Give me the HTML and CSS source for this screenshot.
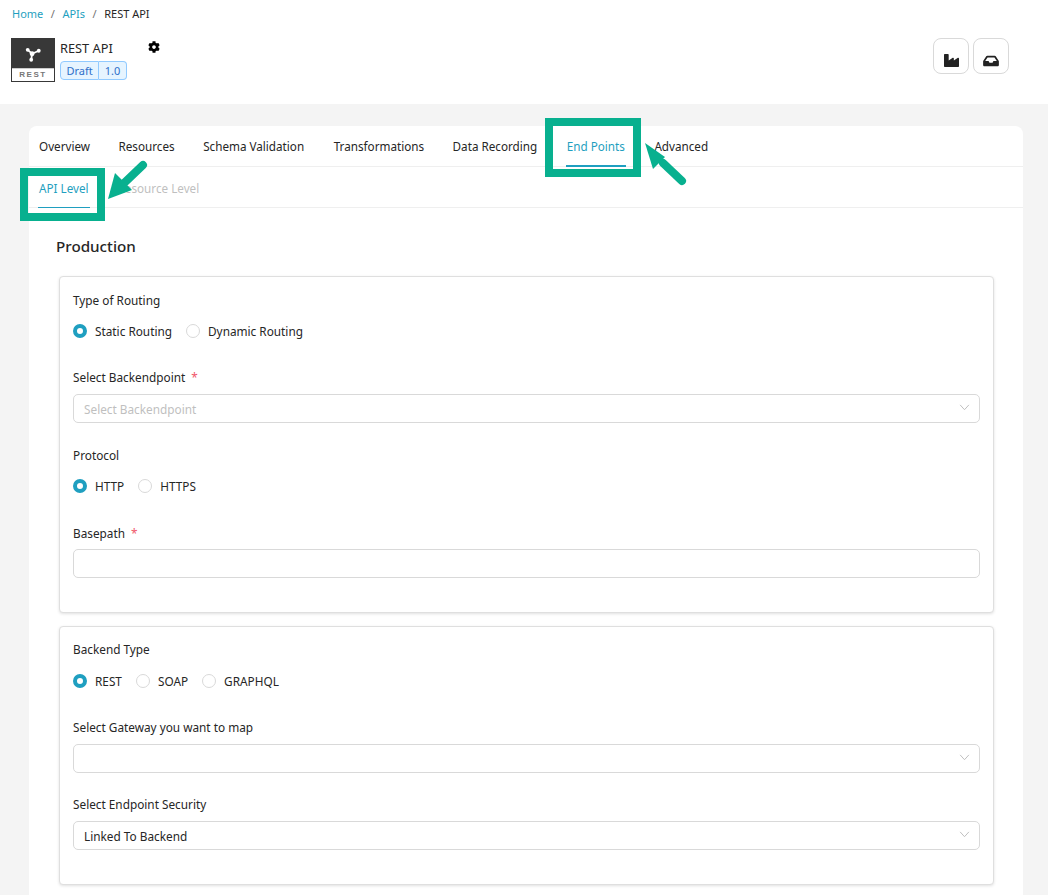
FILE: index.html
```html
<!DOCTYPE html>
<html lang="en">
<head>
<meta charset="utf-8">
<title>REST API</title>
<link rel="stylesheet" href="styles.css">
</head>
<body>
<div class="page">
  <header class="header">
    <nav class="crumbs"><a>Home</a><i>/</i><a>APIs</a><i>/</i><span>REST API</span></nav>
    <div class="title-row">
      <div class="logo">
        <div class="logo-top">
          <svg viewBox="0 0 20 20" width="18" height="18"><path d="M4.100 5.400L9 9.700L16.400 6.400M9 9.700L8 16.400" fill="none" stroke="#fff" stroke-width="2"/><circle cx="4.100" cy="5.400" r="2.100" fill="#fff"/><circle cx="16.400" cy="6.400" r="2.100" fill="#fff"/><circle cx="8" cy="16.400" r="2.100" fill="#fff"/><circle cx="9" cy="9.700" r="2.700" fill="#fff"/></svg>
        </div>
        <div class="logo-label">REST</div>
      </div>
      <div class="api-info">
        <div class="api-name-row">
          <span class="api-name">REST API</span>
          <svg class="gear" viewBox="0 0 512 512" width="12" height="12"><path d="M487.4 315.700l-42.600-24.600c4.300-23.200 4.300-47 0-70.200l42.600-24.600c4.900-2.800 7.100-8.600 5.500-14-11.100-35.600-30-67.800-54.700-94.600-3.800-4.100-10-5.100-14.800-2.300L380.800 110c-17.900-15.400-38.500-27.300-60.800-35.100V25.800c0-5.600-3.900-10.500-9.400-11.700-36.700-8.200-74.300-7.800-109.200 0-5.500 1.200-9.400 6.100-9.400 11.700V75c-22.200 7.900-42.800 19.800-60.800 35.100L88.700 85.500c-4.900-2.800-11-1.900-14.800 2.300-24.700 26.700-43.600 58.900-54.700 94.600-1.700 5.400.6 11.200 5.500 14L67.300 221c-4.300 23.200-4.300 47 0 70.200l-42.600 24.600c-4.900 2.800-7.100 8.600-5.500 14 11.100 35.600 30 67.800 54.700 94.600 3.800 4.100 10 5.100 14.800 2.300l42.600-24.600c17.900 15.400 38.500 27.300 60.800 35.100v49.200c0 5.600 3.900 10.500 9.400 11.700 36.700 8.200 74.300 7.800 109.200 0 5.500-1.200 9.400-6.100 9.400-11.700v-49.200c22.200-7.900 42.800-19.800 60.800-35.100l42.600 24.600c4.900 2.800 11 1.900 14.800-2.300 24.700-26.700 43.600-58.900 54.700-94.600 1.500-5.500-.7-11.300-5.600-14.100zM256 336c-44.100 0-80-35.900-80-80s35.900-80 80-80 80 35.900 80 80-35.900 80-80 80z"/></svg>
        </div>
        <div class="tags"><span class="tag">Draft</span><span class="tag">1.0</span></div>
      </div>
      <div class="actions">
        <button class="icon-btn"><svg viewBox="0 0 512 512" width="15" height="15"><path d="M475.115 163.781L336 252.309v-68.280c0-18.916-20.931-30.399-36.885-20.248L160 252.309V56c0-13.255-10.745-24-24-24H24C10.745 32 0 42.745 0 56v400c0 13.255 10.745 24 24 24h464c13.255 0 24-10.745 24-24V184.029c0-18.917-20.931-30.399-36.885-20.248z" fill="#222"/></svg></button>
        <button class="icon-btn"><svg viewBox="0 0 576 512" width="16" height="14"><path d="M567.938 243.908L462.250 85.374A48.003 48.003 0 0 0 422.311 64H153.689a48 48 0 0 0-39.938 21.374L8.062 243.908A47.994 47.994 0 0 0 0 270.533V400c0 26.510 21.490 48 48 48h480c26.510 0 48-21.490 48-48V270.533a47.994 47.994 0 0 0-8.062-26.625zM162.252 128h251.497l85.333 128H376l-32 64H232l-32-64H76.918l85.334-128z" fill="#222"/></svg></button>
      </div>
    </div>
  </header>

  <main class="content">
    <section class="card">
      <div class="tabs">
        <span class="tab">Overview</span>
        <span class="tab">Resources</span>
        <span class="tab">Schema Validation</span>
        <span class="tab tab-wide">Transformations</span>
        <span class="tab">Data Recording</span>
        <span class="tab active">End Points</span>
        <span class="tab">Advanced</span>
      </div>
      <div class="subtabs">
        <span class="subtab active">API Level</span>
        <span class="subtab muted">Resource Level</span>
      </div>
      <div class="body">
        <h2 class="heading">Production</h2>

        <div class="panel panel-first">
          <div class="label">Type of Routing</div>
          <div class="radios">
            <span class="radio on">Static Routing</span>
            <span class="radio">Dynamic Routing</span>
          </div>
          <div class="label label-top">Select Backendpoint <b class="req">*</b></div>
          <div class="control select placeholder">Select Backendpoint<svg class="chev" viewBox="0 0 12 8" width="11" height="7"><path d="M1 1l5 5.500L11 1" fill="none" stroke="#bdbdbd" stroke-width="1.100"/></svg></div>
          <div class="label label-next">Protocol</div>
          <div class="radios">
            <span class="radio on">HTTP</span>
            <span class="radio">HTTPS</span>
          </div>
          <div class="label label-base">Basepath <b class="req">*</b></div>
          <div class="control"></div>
        </div>

        <div class="panel panel-second">
          <div class="label">Backend Type</div>
          <div class="radios radios-loose">
            <span class="radio on">REST</span>
            <span class="radio">SOAP</span>
            <span class="radio">GRAPHQL</span>
          </div>
          <div class="label label-top">Select Gateway you want to map</div>
          <div class="control select"><svg class="chev" viewBox="0 0 12 8" width="11" height="7"><path d="M1 1l5 5.500L11 1" fill="none" stroke="#bdbdbd" stroke-width="1.100"/></svg></div>
          <div class="label label-next">Select Endpoint Security</div>
          <div class="control select">Linked To Backend<svg class="chev" viewBox="0 0 12 8" width="11" height="7"><path d="M1 1l5 5.500L11 1" fill="none" stroke="#bdbdbd" stroke-width="1.100"/></svg></div>
        </div>
      </div>
    </section>
  </main>

  <div class="callout callout-api"></div>
  <div class="callout callout-end"></div>
  <svg class="arrows" viewBox="0 0 1048 895" width="1048" height="895">
    <path class="arrow-line" d="M143 165L121 186"/>
    <path class="arrow-head" d="M108 199L115 173L132 190Z"/>
    <path class="arrow-line" d="M663 163L682 181"/>
    <path class="arrow-head" d="M645 143L665 157L653 169Z"/>
  </svg>
</div>
</body>
</html>
```
FILE: styles.css
```css
*, *::before, *::after { box-sizing: border-box; }
html, body { margin: 0; padding: 0; }
body {
  font-family: "Noto Sans", "Open Sans", sans-serif;
  font-size: 11.800px;
  color: #262626;
  background: #f4f4f4;
}
.page { position: relative; width: 1048px; height: 895px; overflow: hidden; }

.header { height: 104px; background: #fff; padding: 6px 39px 0 11px; }
.crumbs { display: flex; align-items: center; height: 16px; padding-left: 1px; font-size: 11px; line-height: 16px; }
.crumbs a { color: #1f9fc0; }
.crumbs i { font-style: normal; color: #737373; margin: 0 7.500px; }
.title-row { display: flex; margin-top: 16px; }
.logo { width: 44px; height: 44px; border: 1px solid #383838; display: flex; flex-direction: column; }
.logo-top { height: 29px; background: #383838; display: flex; align-items: center; justify-content: center; }
.logo-label { flex: 1; background: #fff; border-top: 1px solid #ccc; font-family: "Liberation Sans", sans-serif; font-size: 8px; font-weight: 700; letter-spacing: 1.500px; color: #777; text-align: center; line-height: 12px; }
.api-info { margin-left: 5px; }
.api-name-row { display: flex; align-items: flex-start; height: 23px; }
.api-name { font-size: 12.800px; line-height: 20px; }
.gear { margin-left: 35px; margin-top: 3px; }
.tags { display: flex; }
.tag { height: 19px; padding: 0 5.500px; line-height: 17px; font-size: 11px; color: #2f6fc9; background: #e6f4ff; border: 1px solid #91caff; }
.tag:first-child { border-radius: 4px 0 0 4px; }
.tag:last-child { border-radius: 0 4px 4px 0; border-left: 0; }
.actions { margin-left: auto; display: flex; gap: 4px; }
.icon-btn { width: 36px; height: 36px; background: #fff; border: 1px solid #d9d9d9; border-radius: 8px; display: flex; align-items: flex-end; justify-content: center; padding: 0 0 5px; }

.content { padding: 22px 25px 0 29px; }
.card { background: #fff; border-radius: 8px 8px 0 0; height: 769px; }
.tabs { display: flex; height: 41px; padding-left: 9px; border-bottom: 1px solid #efefef; font-size: 11.700px; }
.tab { padding: 0 1px; margin-right: 26.500px; line-height: 40px; white-space: nowrap; }
.tab-wide { margin-left: 1px; }
.tab.active { color: #1f9fc0; border-bottom: 2px solid #1f9fc0; height: 41px; margin-left: 1px; margin-right: 27.500px; }
.subtabs { display: flex; height: 41px; padding-left: 9px; border-bottom: 1px solid #efefef; font-size: 11.700px; }
.subtab { line-height: 43px; padding: 0 1px; margin-right: 27px; white-space: nowrap; }
.subtab.active { color: #1f9fc0; border-bottom: 1px solid #1f9fc0; height: 41px; }
.subtab.muted { color: #bfbfbf; }

.body { padding: 0 29px 0 30px; }
.heading { margin: 0 0 0 -3px; padding-top: 28px; height: 68px; font-size: 15.200px; line-height: 20px; font-weight: 500; }
.panel { background: #fff; border: 1px solid #dfdfdf; border-radius: 4px; padding: 13px 13px 0; box-shadow: 0 1px 3px rgba(0, 0, 0, .12); }
.panel-first { height: 337px; }
.panel-second { height: 259px; margin-top: 13px; padding-top: 12px; }
.label { line-height: 20px; height: 20px; }
.label-top { margin-top: 26px; margin-bottom: 7px; }
.label-next { margin-top: 21px; margin-bottom: 7px; }
.panel-first .label-next { margin-top: 22px; margin-bottom: 11px; }
.label-base { margin-top: 27px; margin-bottom: 6px; }
.req { color: #f0576a; font-weight: 400; margin-left: 3px; }
.radios { display: flex; gap: 14px; margin-top: 11px; height: 20px; align-items: center; }
.panel-first .label-next + .radios { margin-top: 0; }
.radios-loose { margin-top: 12px; }
.radio { display: flex; align-items: center; gap: 8px; line-height: 20px; }
.radio::before { content: ""; flex: none; width: 14px; height: 14px; border-radius: 50%; border: 1px solid #d9d9d9; background: #fff; }
.radio.on::before { border: 4px solid #1f9fc0; }
.control { position: relative; height: 29px; border: 1px solid #d9d9d9; border-radius: 5px; padding: 0 10px; line-height: 28px; }
.placeholder { color: #bfbfbf; }
.chev { position: absolute; right: 9px; top: 9px; }

.callout { position: absolute; border: 8px solid #08b08f; }
.callout-api { left: 20px; top: 168px; width: 85px; height: 53px; }
.callout-end { left: 545px; top: 118px; width: 96px; height: 59px; }
.arrows { position: absolute; left: 0; top: 0; pointer-events: none; }
.arrow-line { fill: none; stroke: #08b08f; stroke-width: 8; stroke-linecap: round; }
.arrow-head { fill: #08b08f; }
```
